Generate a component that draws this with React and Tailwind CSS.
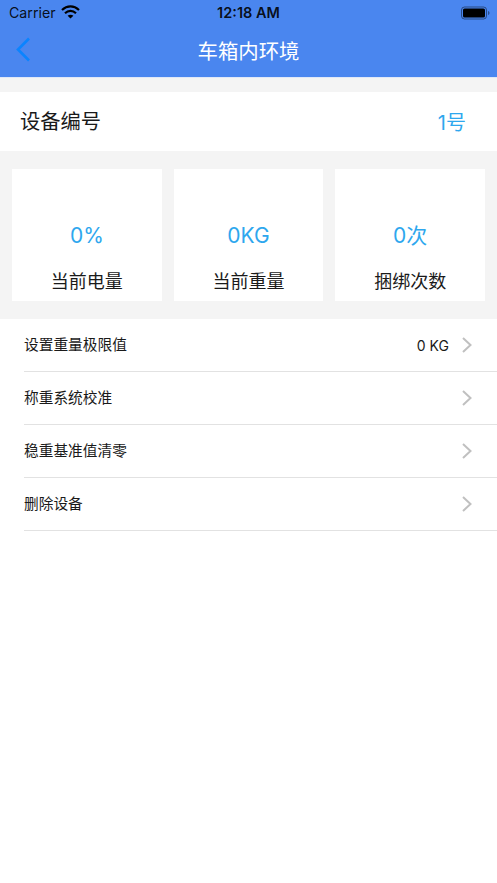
import React from 'react';

const sans = "font-['Inter','Noto_Sans_CJK_SC',sans-serif]";

const stats = [
  { value: '0%', label: '当前电量' },
  { value: '0KG', label: '当前重量' },
  { value: '0次', label: '捆绑次数' },
];

const rows = [
  { label: '设置重量极限值', value: '0 KG' },
  { label: '称重系统校准' },
  { label: '稳重基准值清零' },
  { label: '删除设备' },
];

const Wifi = () => (
  <svg width="19" height="14" viewBox="0 0 19 14" fill="none" stroke="#000" strokeWidth="2.2">
    <path d="M1 5 C6 0.2 13 0.2 18 5" />
    <path d="M4 8.2 C7.2 5.2 11.8 5.2 15 8.2" />
    <path d="M9.5 13.6 L6.6 10.8 C8.2 9.5 10.8 9.5 12.4 10.8 Z" fill="#000" stroke="none" />
  </svg>
);

const Battery = () => (
  <svg width="29" height="14" viewBox="0 0 29 14" fill="none">
    <rect x="0.5" y="1" width="25" height="12" rx="3" stroke="#000" strokeOpacity="0.45" />
    <rect x="2" y="2.5" width="22" height="9" rx="1.6" fill="#000" />
    <path d="M27 5 C28 5.3 28.5 6 28.5 7 C28.5 8 28 8.7 27 9 Z" fill="#000" fillOpacity="0.4" />
  </svg>
);

const Chevron = () => (
  <svg width="10" height="16" viewBox="0 0 10 16" fill="none" stroke="#c0c0c0" strokeWidth="2">
    <path d="M1 1 L8.5 8 L1 15" />
  </svg>
);

export default function App() {
  return (
    <div className={`${sans} min-h-[883px] bg-white flex flex-col`}>
      <div className="bg-[#4a86ef] h-[78px] flex flex-col border-b border-[#dfe8f8]">
        <div className="h-[26px] relative flex items-center pl-[9px]">
          <span className="text-[14.2px] text-black/90">Carrier</span>
          <span className="ml-[5px] -mt-[3px]"><Wifi /></span>
          <span className="absolute left-0 right-0 text-center text-[14.5px] font-semibold text-black/90 pointer-events-none">12:18 AM</span>
          <span className="ml-auto mr-[7px]"><Battery /></span>
        </div>
        <div className="flex-1 relative flex items-center justify-center">
          <svg className="absolute left-[15px] top-[11px]" width="16" height="25" viewBox="0 0 16 25" fill="none" stroke="#0a84ff" strokeWidth="2.6">
            <path d="M14 1.5 L3 12.5 L14 23.5" />
          </svg>
          <span className="text-[20.4px] text-white pt-[1px]">车箱内环境</span>
        </div>
      </div>

      <div className="bg-[#f4f4f4] pt-[14px] pb-[18px]">
        <div className="bg-white h-[59px] flex items-center justify-between pl-[20px] pr-[31px]">
          <span className="text-[20.3px] text-[#1a1a1a] pt-[2px]">设备编号</span>
          <span className="text-[20px] text-[#2ea7ee] pt-[2px]">1号</span>
        </div>
        <div className="grid grid-cols-3 gap-[12px] px-[12px] mt-[18px]">
          {stats.map((s) => (
            <div key={s.label} className="bg-white h-[132px] flex flex-col items-center">
              <span className="mt-[53px] text-[21px] leading-[28px] text-[#2ea7ee]">{s.value}</span>
              <span className="mt-[19px] text-[18px] leading-[26px] text-[#1a1a1a]">{s.label}</span>
            </div>
          ))}
        </div>
      </div>

      <div className="pl-[24px]">
        {rows.map((r) => (
          <div key={r.label} className="h-[53px] flex items-center border-b border-[#e2e2e2]">
            <span className="text-[14.7px] text-[#1a1a1a] pt-[1px]">{r.label}</span>
            {r.value && <span className="ml-auto text-[14px] text-[#1a1a1a] pt-[1px]">{r.value}</span>}
            <span className={`${r.value ? 'ml-[13px]' : 'ml-auto'} mr-[25px]`}><Chevron /></span>
          </div>
        ))}
      </div>
    </div>
  );
}
